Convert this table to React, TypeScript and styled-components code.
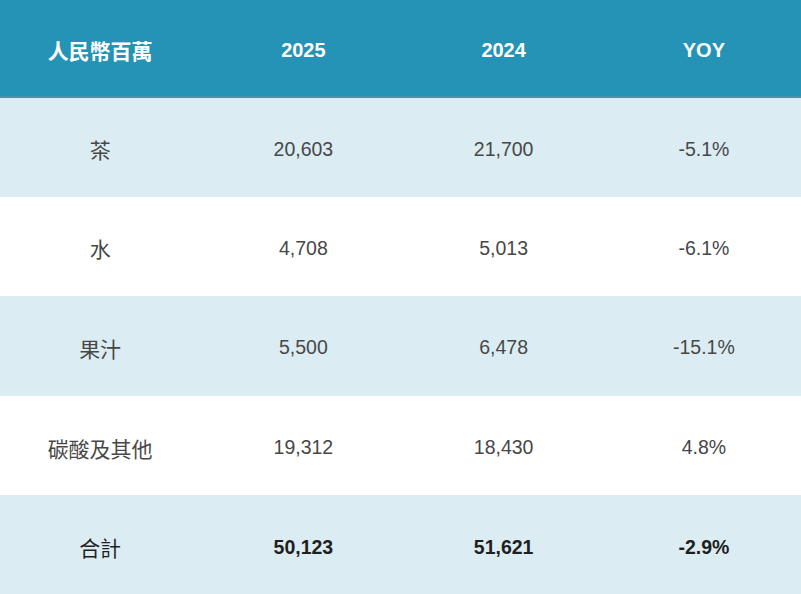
import React from "react";
import styled, { createGlobalStyle } from "styled-components";

const Global = createGlobalStyle`
  html, body { margin: 0; padding: 0; background: #ffffff; }
  body { font-family: "Liberation Sans", Arial, "Noto Sans CJK TC", sans-serif; }
`;

const Table = styled.table`
  width: 801px;
  border-collapse: collapse;
  table-layout: fixed;
`;

const HeadRow = styled.tr`
  background: #2593b5;
  border-bottom: 2px solid #4f8ea3;
`;

const HeadCell = styled.th<{ $label: boolean }>`
  height: 97px;
  padding: 4px 0 0 ${(p) => (p.$label ? "0" : "6px")};
  color: #ffffff;
  font-size: ${(p) => (p.$label ? "21px" : "20px")};
  font-weight: 700;
  text-align: center;
  vertical-align: middle;
  box-sizing: border-box;
  font-family: "Liberation Sans", Arial, "Noto Sans CJK TC", sans-serif;
`;

const Row = styled.tr<{ $shaded: boolean }>`
  background: ${(p) => (p.$shaded ? "#dbedf3" : "#ffffff")};
`;

const Cell = styled.td<{ $bold: boolean; $label: boolean }>`
  height: 99.6px;
  padding: 4px 0 0 ${(p) => (p.$label ? "0" : "6px")};
  box-sizing: border-box;
  text-align: center;
  vertical-align: middle;
  font-size: ${(p) => (p.$label ? "21px" : "19.5px")};
  color: ${(p) => (p.$bold ? "#1f1f1f" : "#474747")};
  font-weight: ${(p) => (p.$bold && !p.$label ? 700 : 400)};
  font-family: "Liberation Sans", Arial, "Noto Sans CJK TC", sans-serif;
`;

const rows = [
  ["茶", "20,603", "21,700", "-5.1%"],
  ["水", "4,708", "5,013", "-6.1%"],
  ["果汁", "5,500", "6,478", "-15.1%"],
  ["碳酸及其他", "19,312", "18,430", "4.8%"],
  ["合計", "50,123", "51,621", "-2.9%"],
];

const heads = ["人民幣百萬", "2025", "2024", "YOY"];

export default function App() {
  return (
    <>
      <Global />
      <Table>
        <thead>
          <HeadRow>
            {heads.map((h, j) => (
              <HeadCell key={h} $label={j === 0}>
                {h}
              </HeadCell>
            ))}
          </HeadRow>
        </thead>
        <tbody>
          {rows.map((r, i) => (
            <Row key={r[0]} $shaded={i % 2 === 0}>
              {r.map((c, j) => (
                <Cell key={j} $bold={i === rows.length - 1} $label={j === 0}>
                  {c}
                </Cell>
              ))}
            </Row>
          ))}
        </tbody>
      </Table>
    </>
  );
}
